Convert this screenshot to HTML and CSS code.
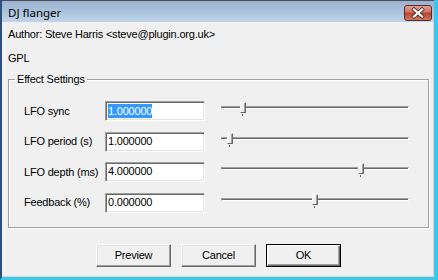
FILE: index.html
```html
<!DOCTYPE html>
<html>
<head>
<meta charset="utf-8">
<link rel="stylesheet" href="styles.css">
</head>
<body>
<div class="window">
  <div class="titlebar">
    <span class="title">DJ flanger</span>
    <svg class="close" width="28" height="16" viewBox="0 0 28 16">
      <defs>
        <linearGradient id="cg" x1="0" y1="0" x2="0" y2="1">
          <stop offset="0" stop-color="#e8a291"/>
          <stop offset="0.45" stop-color="#d0705c"/>
          <stop offset="0.5" stop-color="#b8432e"/>
          <stop offset="1" stop-color="#d47a5e"/>
        </linearGradient>
      </defs>
      <rect x="0.5" y="0.5" width="27" height="15" rx="2.5" fill="url(#cg)" stroke="#5b2a2a"/>
      <path d="M10 4.5 L18 11.5 M18 4.5 L10 11.5" stroke="#4a3636" stroke-width="4" stroke-linecap="square"/>
      <path d="M10 4.5 L18 11.5 M18 4.5 L10 11.5" stroke="#ffffff" stroke-width="2.2" stroke-linecap="square"/>
    </svg>
  </div>
  <div class="client">
    <div class="line">Author: Steve Harris &lt;steve@plugin.org.uk&gt;</div>
    <div class="line gpl">GPL</div>
    <fieldset class="group">
      <legend>Effect Settings</legend>
      <div class="rows">
        <div class="row">
          <span class="label">LFO sync</span>
          <div class="field"><span class="sel">1.000000</span></div>
          <div class="slider"><div class="track"></div><div class="thumb" style="left:19px"></div></div>
        </div>
        <div class="row">
          <span class="label">LFO period (s)</span>
          <div class="field">1.000000</div>
          <div class="slider"><div class="track"></div><div class="thumb" style="left:6px"></div></div>
        </div>
        <div class="row">
          <span class="label">LFO depth (ms)</span>
          <div class="field">4.000000</div>
          <div class="slider"><div class="track"></div><div class="thumb" style="left:137px"></div></div>
        </div>
        <div class="row">
          <span class="label">Feedback (%)</span>
          <div class="field">0.000000</div>
          <div class="slider"><div class="track"></div><div class="thumb" style="left:91px"></div></div>
        </div>
      </div>
    </fieldset>
    <div class="buttons">
      <div class="btn">Preview</div>
      <div class="btn">Cancel</div>
      <div class="btn default">OK</div>
    </div>
  </div>
</div>
</body>
</html>
```
FILE: styles.css
```css
html, body {
  margin: 0;
  padding: 0;
  background: #f0f0f0;
}
.window {
  width: 438px;
  height: 280px;
  box-sizing: border-box;
  border-left: 2px solid #2d4f7c;
  border-right: 4px solid #3cc6ec;
  border-bottom: 3px solid #3cc6ec;
  background: #f0f0f0;
  font-family: "Liberation Sans", Arial, sans-serif;
  font-size: 11px;
  letter-spacing: -0.2px;
  color: #000;
  display: flex;
  flex-direction: column;
}
.titlebar {
  height: 22px;
  box-sizing: border-box;
  border-top: 1px solid #4a4f57;
  background: linear-gradient(#9ab2cf, #bfd4ea);
  display: flex;
  justify-content: space-between;
  align-items: flex-start;
  padding: 0 2px 0 6px;
}
.title {
  font-family: "Noto Sans", "DejaVu Sans", sans-serif;
  font-size: 11.5px;
  letter-spacing: 0;
  line-height: 15px;
  padding-top: 4px;
}
.close {
  display: block;
  margin-top: 4px;
}
.client {
  flex: 1;
  padding: 6px 0 0 6px;
  border-right: 1px solid #d9d9d9;
  border-bottom: 1px solid #d9d9d9;
}
.line {
  line-height: 13px;
  height: 13px;
}
.gpl {
  margin-top: 11px;
}
.group {
  width: 421px;
  box-sizing: border-box;
  margin: 8px 0 0 0;
  padding: 0;
  border: 1px solid #a0a0a0;
  box-shadow: 1px 1px 0 #fff, inset 1px 1px 0 #fff;
  min-width: 0;
}
.group legend {
  margin-left: 6px;
  padding: 0 2px;
  line-height: 13px;
}
.rows {
  display: grid;
  grid-template-columns: 65px 100px 188px;
  column-gap: 16px;
  row-gap: 10.67px;
  grid-auto-rows: 20px;
  padding: 15px 0 14px 15px;
}
.row {
  display: contents;
}
.label {
  align-self: center;
  line-height: 13px;
  white-space: nowrap;
}
.field {
  background: #fff;
  box-sizing: border-box;
  height: 20px;
  border-style: solid;
  border-width: 1px;
  border-color: #a0a0a0 #fff #fff #a0a0a0;
  box-shadow: inset 1px 1px 0 #696969, inset -1px -1px 0 #e3e3e3;
  padding: 0 0 0 2px;
  line-height: 17px;
}
.sel {
  background: #3399ff;
  color: #fff;
  display: inline-block;
  line-height: 14px;
  margin-top: 2px;
}
.slider {
  position: relative;
}
.track {
  margin-top: 5px;
  height: 1px;
  border-style: solid;
  border-width: 1px;
  border-color: #a0a0a0 #fff #fff #a0a0a0;
  background: #696969;
}
.thumb {
  position: absolute;
  top: 1px;
  width: 6px;
  height: 11px;
  box-sizing: border-box;
  background: #f0f0f0;
  border-style: solid;
  border-width: 1px;
  border-color: #fff #696969 #696969 #fff;
  box-shadow: inset -1px 0 0 #a0a0a0;
}
.thumb::after {
  content: "";
  position: absolute;
  left: 1px;
  bottom: -4px;
  width: 1px;
  height: 2px;
  background: #696969;
}
.buttons {
  display: flex;
  gap: 10px;
  margin-top: 16px;
  padding-left: 88px;
}
.btn {
  width: 75px;
  height: 23px;
  box-sizing: border-box;
  background: #f0f0f0;
  border-style: solid;
  border-width: 1px;
  border-color: #fff #696969 #696969 #fff;
  box-shadow: inset -1px -1px 0 #a0a0a0, inset 1px 1px 0 #e3e3e3;
  display: flex;
  align-items: center;
  justify-content: center;
  line-height: 13px;
}
.btn.default {
  border: 1px solid #000;
  box-shadow: inset 1px 1px 0 #fff, inset -1px -1px 0 #696969, inset -2px -2px 0 #a0a0a0;
}
```
